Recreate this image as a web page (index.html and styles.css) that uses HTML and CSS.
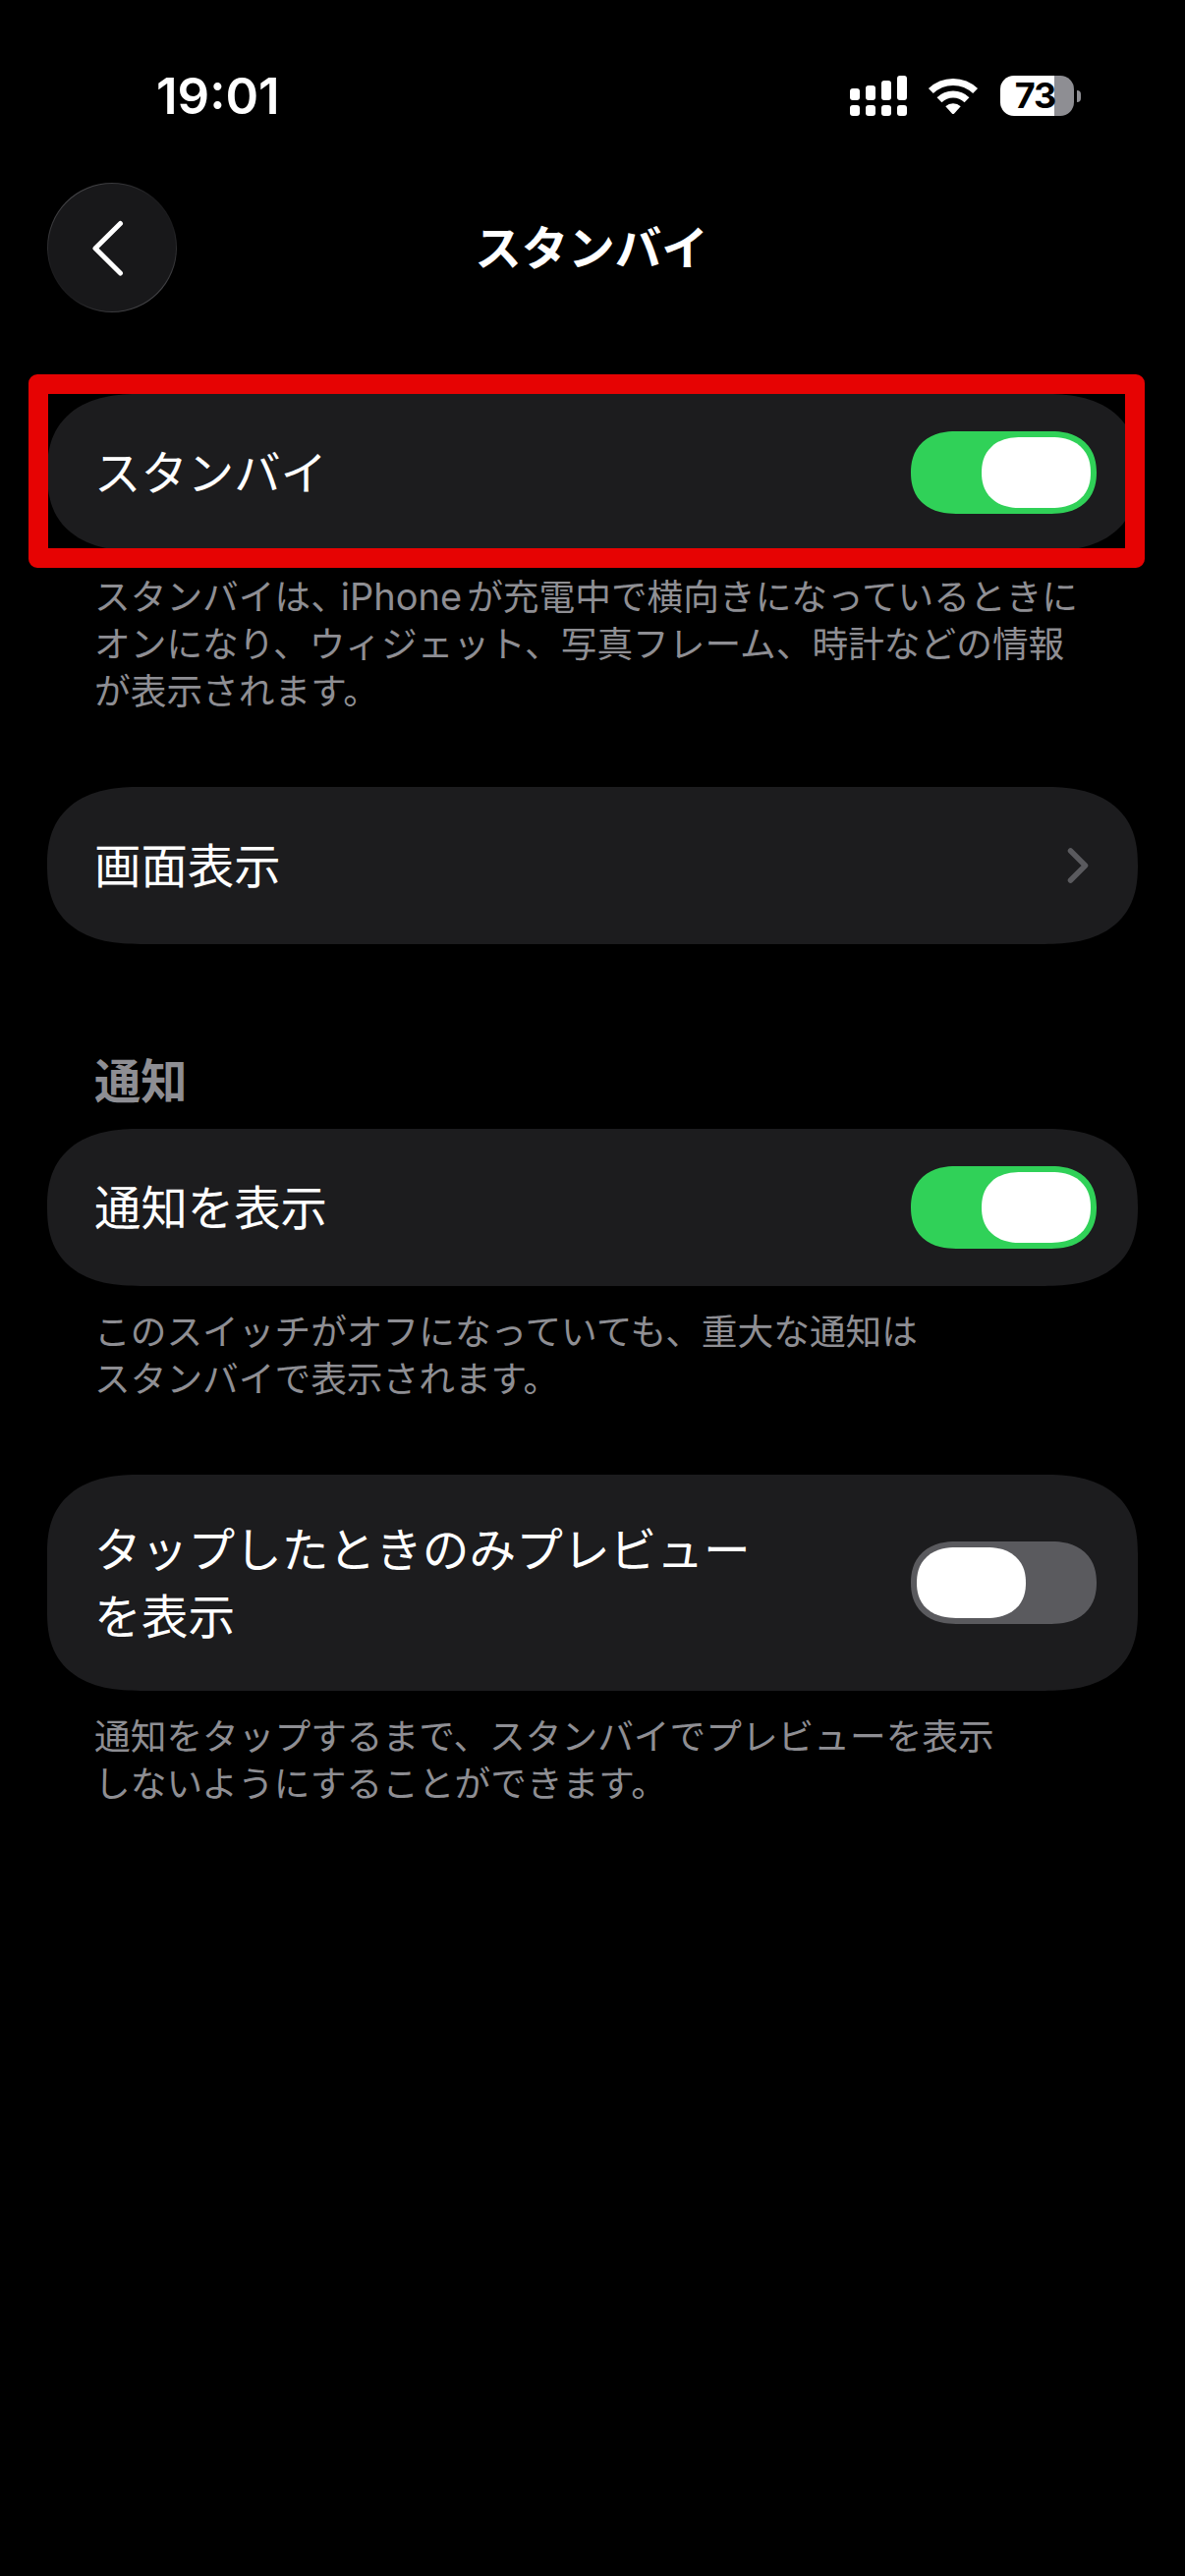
FILE: index.html
```
<!DOCTYPE html>
<html lang="ja">
<head>
    <meta charset="UTF-8">
    <meta name="viewport" content="width=device-width, initial-scale=1.0">
    <title>スタンバイ</title>
    <link rel="stylesheet" href="styles.css">
</head>
<body>

    <div class="status-bar">
        <span class="time">19:01</span>
        <div class="status-icons">
            <svg class="signal" width="58" height="41" viewBox="0 0 58 41" fill="#fff">
                <rect x="0" y="13" width="10" height="12" rx="3"/>
                <rect x="16" y="10" width="10" height="15" rx="3"/>
                <rect x="32" y="5" width="10" height="20" rx="3"/>
                <rect x="48" y="0" width="10" height="25" rx="3"/>
                <rect x="0" y="30" width="10" height="11" rx="3"/>
                <rect x="16" y="30" width="10" height="11" rx="3"/>
                <rect x="32" y="30" width="10" height="11" rx="3"/>
                <rect x="48" y="30" width="10" height="11" rx="3"/>
            </svg>
            <svg class="wifi" width="52" height="38" viewBox="0 0 52 38">
                <g fill="none" stroke="#fff" stroke-width="7">
                    <path d="M3.4 13.6 A32.5 32.5 0 0 1 48.6 13.6"/>
                    <path d="M12 22.7 A20 20 0 0 1 40 22.7"/>
                </g>
                <path d="M18.3 29.2 A11.5 11.5 0 0 1 33.7 29.2 L27.2 36.4 Q26 37.6 24.8 36.4 Z" fill="#fff"/>
            </svg>
            <div class="battery">
                <div class="battery-body">73</div>
                <div class="battery-cap"></div>
            </div>
        </div>
    </div>

    <header class="nav-bar">
        <button class="back-btn" aria-label="戻る">
            <svg width="132" height="132" viewBox="0 0 132 132" fill="none">
                <path d="M74.5 41.5 L49 66.7 L74.5 92" stroke="#fff" stroke-width="5" stroke-linecap="round" stroke-linejoin="round"/>
            </svg>
        </button>
        <h1>スタンバイ</h1>
    </header>

    <main>
        <section>
            <div class="card">
                <span class="label">スタンバイ</span>
                <div class="toggle on"></div>
                <div class="highlight"></div>
            </div>
            <p class="note">スタンバイは、<span class="latin">iPhone</span>が充電中で横向きになっているときに<br>オンになり、ウィジェット、写真フレーム、時計などの情報<br>が表示されます。</p>
        </section>

        <section>
            <div class="card">
                <span class="label">画面表示</span>
                <svg class="chevron" width="22" height="38" viewBox="0 0 22 38" fill="none">
                    <path d="M3.5 4 L18.5 19 L3.5 34" stroke="#5a5a5e" stroke-width="5.5" stroke-linecap="round" stroke-linejoin="round"/>
                </svg>
            </div>
        </section>

        <section class="with-title">
            <h2>通知</h2>
            <div class="card">
                <span class="label">通知を表示</span>
                <div class="toggle on"></div>
            </div>
            <p class="note">このスイッチがオフになっていても、重大な通知は<br>スタンバイで表示されます。</p>
        </section>

        <section>
            <div class="card tall">
                <span class="label">タップしたときのみプレビュー<br>を表示</span>
                <div class="toggle"></div>
            </div>
            <p class="note">通知をタップするまで、スタンバイでプレビューを表示<br>しないようにすることができます。</p>
        </section>
    </main>

</body>
</html>
```
FILE: styles.css
```
* {
    box-sizing: border-box;
}

body {
    margin: 0;
    min-height: 2622px;
    background-color: #000;
    color: #fff;
    font-family: "Noto Sans CJK JP", sans-serif;
}

.status-bar {
    display: flex;
    align-items: center;
    justify-content: space-between;
    height: 41px;
    margin-top: 77px;
    padding: 0 106px 0 159px;
}

.time {
    font-family: Inter, sans-serif;
    font-size: 51px;
    font-weight: 600;
    letter-spacing: 0;
}

.status-icons {
    display: flex;
    align-items: center;
}

.wifi {
    margin: 0 22px 0 21px;
}

.battery {
    display: flex;
    align-items: center;
    gap: 3px;
}

.battery-body {
    width: 75px;
    height: 41px;
    padding-right: 4px;
    border-radius: 14px;
    background: linear-gradient(to right, #fff 55px, #8e8e93 55px);
    color: #000;
    font-family: Inter, sans-serif;
    font-size: 36px;
    font-weight: 700;
    line-height: 41px;
    text-align: center;
    letter-spacing: -1px;
}

.battery-cap {
    width: 4px;
    height: 12px;
    border-radius: 0 4px 4px 0;
    background-color: #8e8e93;
}

.nav-bar {
    display: grid;
    grid-template-columns: 132px 1fr 132px;
    align-items: center;
    margin-top: 68px;
    padding: 0 48px;
}

.back-btn {
    width: 132px;
    height: 132px;
    padding: 0;
    border: 1px solid transparent;
    border-radius: 50%;
    /* rim is lighter at the top left and bottom right */
    background: linear-gradient(#18181a, #18181a) padding-box,
        linear-gradient(145deg, #5a5a5e, #1c1c1e 40%, #1c1c1e 60%, #5a5a5e) border-box;
}

.back-btn svg {
    display: block;
    margin: -1px;
}

h1 {
    margin: 0;
    padding: 0 2px 4px 0;
    font-size: 47.5px;
    font-weight: 600;
    line-height: 68px;
    text-align: center;
}

main {
    margin-top: 83px;
    padding: 0 48px;
}

section {
    margin-bottom: 74px;
}

.with-title {
    margin-top: 103px;
}

h2 {
    margin: 0 0 17px 48px;
    color: #8e8e93;
    font-size: 47.3px;
    font-weight: 600;
    line-height: 68px;
}

.card {
    position: relative;
    display: flex;
    align-items: center;
    justify-content: space-between;
    height: 160px;
    padding: 0 42px 0 48px;
    border-radius: 95px / 80px;
    corner-shape: superellipse(1.3);
    background-color: #1c1c1e;
    font-size: 47.4px;
    line-height: 68px;
}

.card.tall {
    height: 220px;
    font-size: 47.7px;
}

.label {
    padding-bottom: 4px;
}

.chevron {
    margin-right: 8px;
}

.toggle {
    width: 189px;
    height: 84px;
    padding: 6px;
    border-radius: 46px / 42px;
    corner-shape: superellipse(1.2);
    background-color: #5a5a5e;
}

.toggle::before {
    content: "";
    display: block;
    width: 111px;
    height: 72px;
    border-radius: 40px / 36px;
    corner-shape: superellipse(1.2);
    background-color: #fff;
}

.toggle.on {
    background-color: #30d158;
}

.toggle.on::before {
    margin-left: auto;
}

.highlight {
    position: absolute;
    top: -20px;
    right: -7px;
    bottom: -17px;
    left: -19px;
    border: 20px solid #e60303;
    border-radius: 9px;
}

.note {
    margin: 20px 0 0 48px;
    padding-bottom: 2px;
    color: #8e8e93;
    font-size: 36.7px;
    line-height: 48px;
    white-space: nowrap;
}

.latin {
    margin: 0 5px 0 -6px;
    font-family: Inter, sans-serif;
    font-size: 38px;
    line-height: 1;
}
```
